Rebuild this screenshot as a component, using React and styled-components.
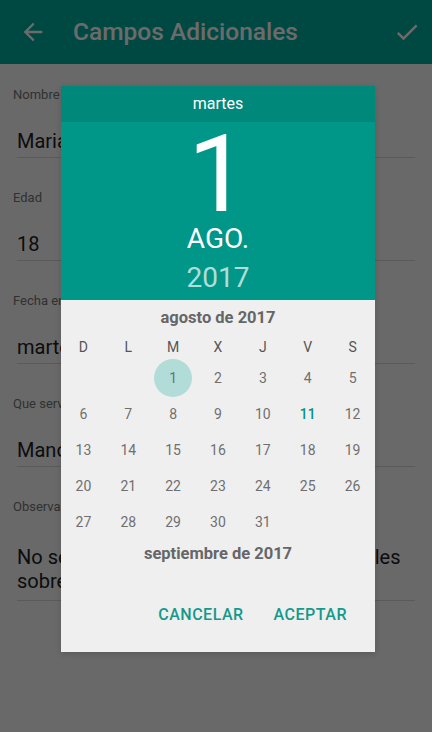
import React from "react";
import styled, { createGlobalStyle } from "styled-components";

const Global = createGlobalStyle`
  html, body { margin: 0; padding: 0; }
  body { font-family: Roboto, "Noto Sans", "Liberation Sans", sans-serif; background: #fafafa; }
  #root { width: 432px; height: 732px; overflow: hidden; }
`;

const Screen = styled.div`
  position: relative;
  width: 432px;
  height: 732px;
  background: #fafafa;
  overflow: hidden;
`;

const AppBar = styled.header`
  height: 64px;
  background: #00ac9d;
  display: flex;
  align-items: center;
  padding: 0 0 0 19px;
  color: #ffffff;
  box-sizing: border-box;
`;

const Title = styled.h1`
  flex: 1;
  margin: 0 0 0 26px;
  font-size: 24.5px;
  font-weight: 500;
  line-height: 28px;
  padding-bottom: 1px;
`;

const IconBox = styled.span`
  display: flex;
  width: 28px;
  height: 28px;
  margin-right: ${(p) => p.$mr || 0}px;
`;

const Form = styled.div`
  display: flex;
  flex-direction: column;
  padding: 23px 17px 0 13px;
`;

const Field = styled.div`
  display: flex;
  flex-direction: column;
  margin-bottom: 32px;
`;

const Label = styled.div`
  font-size: 13px;
  line-height: 16px;
  color: #757575;
  white-space: nowrap;
`;

const Value = styled.div`
  margin-top: ${(p) => (p.$multi ? 30 : 24)}px;
  margin-left: 4px;
  font-size: 20px;
  line-height: ${(p) => (p.$multi ? 24 : 28)}px;
  color: #212121;
  padding-bottom: ${(p) => (p.$multi ? 7 : 2)}px;
  border-bottom: 1px solid #d6d6d6;
  white-space: nowrap;
`;

const Overlay = styled.div`
  position: absolute;
  inset: 0;
  background: rgba(0, 0, 0, 0.58);
`;

const Dialog = styled.div`
  position: absolute;
  left: 61px;
  top: 86px;
  width: 314px;
  display: flex;
  flex-direction: column;
  background: #efefef;
  box-shadow: 0 2px 6px rgba(0, 0, 0, 0.15);
`;

const DayStrip = styled.div`
  height: 36px;
  background: #00897b;
  color: #ffffff;
  font-size: 16px;
  display: flex;
  align-items: center;
  justify-content: center;
  padding-bottom: 1px;
  box-sizing: border-box;
`;

const Header = styled.div`
  height: 178px;
  background: #009688;
  display: flex;
  flex-direction: column;
  align-items: center;
  color: #ffffff;
`;

const BigDay = styled.div`
  font-size: 108px;
  line-height: 97px;
  height: 97px;
  margin-top: 4px;
  font-weight: 400;
`;

const Month = styled.div`
  font-size: 28px;
  line-height: 32px;
`;

const Year = styled.div`
  font-size: 28px;
  line-height: 32px;
  margin-top: 7px;
  color: rgba(255, 255, 255, 0.7);
`;

const MonthTitle = styled.div`
  height: 34px;
  display: flex;
  align-items: center;
  justify-content: center;
  font-size: 16.5px;
  font-weight: 700;
  color: #666666;
  padding-top: 1px;
  box-sizing: border-box;
`;

const Grid = styled.div`
  display: grid;
  grid-template-columns: repeat(7, 1fr);
  grid-auto-rows: 36px;
`;

const WeekHead = styled.div`
  display: grid;
  grid-template-columns: repeat(7, 1fr);
  height: 26px;
  align-items: center;
`;

const WeekDay = styled.div`
  text-align: center;
  font-size: 14px;
  color: #555555;
`;

const Day = styled.div`
  display: flex;
  align-items: center;
  justify-content: center;
  font-size: 14px;
  color: ${(p) => (p.$today ? "#009688" : "#6f6f6f")};
  font-weight: ${(p) => (p.$today ? 500 : 400)};
`;

const Circle = styled.span`
  width: 38px;
  height: 38px;
  border-radius: 50%;
  background: ${(p) => (p.$on ? "#b2dcd8" : "transparent")};
  display: flex;
  align-items: center;
  justify-content: center;
`;

const NextMonth = styled(MonthTitle)`
  height: 26px;
`;

const Actions = styled.div`
  display: flex;
  justify-content: flex-end;
  gap: 14px;
  padding: 30px 20px 20px 0;
`;

const Btn = styled.button`
  border: none;
  background: transparent;
  height: 36px;
  padding: 0 8px;
  font-family: inherit;
  font-size: 16px;
  font-weight: 500;
  letter-spacing: 0.5px;
  color: #14998a;
`;

const ArrowIcon = () => (
  <svg width="28" height="28" viewBox="0 0 24 24" fill="#ffffff">
    <path d="M20 11H7.83l5.59-5.59L12 4l-8 8 8 8 1.41-1.41L7.83 13H20v-2z" />
  </svg>
);

const CheckIcon = () => (
  <svg width="28" height="28" viewBox="0 0 24 24" fill="#ffffff">
    <path d="M9 16.17L4.83 12l-1.42 1.41L9 19 21 7l-1.41-1.41z" />
  </svg>
);

const fields = [
  { label: "Nombre", value: "Maria" },
  { label: "Edad", value: "18" },
  { label: "Fecha en que se realizó", value: "martes" },
  { label: "Que servicio recibió", value: "Manos" },
];

const days = [null, null, ...Array.from({ length: 31 }, (_, i) => i + 1)];

export default function App() {
  return (
    <Screen>
      <Global />
      <AppBar>
        <IconBox>
          <ArrowIcon />
        </IconBox>
        <Title>Campos Adicionales</Title>
        <IconBox $mr={11}>
          <CheckIcon />
        </IconBox>
      </AppBar>
      <Form>
        {fields.map((f) => (
          <Field key={f.label}>
            <Label>{f.label}</Label>
            <Value>{f.value}</Value>
          </Field>
        ))}
        <Field>
          <Label>Observaciones</Label>
          <Value $multi>
            No se observaron problemas ni los detalles
            <br />
            sobre el servicio.
          </Value>
        </Field>
      </Form>
      <Overlay />
      <Dialog>
        <DayStrip>martes</DayStrip>
        <Header>
          <BigDay>1</BigDay>
          <Month>AGO.</Month>
          <Year>2017</Year>
        </Header>
        <MonthTitle>agosto de 2017</MonthTitle>
        <WeekHead>
          {["D", "L", "M", "X", "J", "V", "S"].map((d) => (
            <WeekDay key={d}>{d}</WeekDay>
          ))}
        </WeekHead>
        <Grid>
          {days.map((d, i) => (
            <Day key={i} $today={d === 11}>
              {d && <Circle $on={d === 1}>{d}</Circle>}
            </Day>
          ))}
        </Grid>
        <NextMonth>septiembre de 2017</NextMonth>
        <Actions>
          <Btn>CANCELAR</Btn>
          <Btn>ACEPTAR</Btn>
        </Actions>
      </Dialog>
    </Screen>
  );
}
